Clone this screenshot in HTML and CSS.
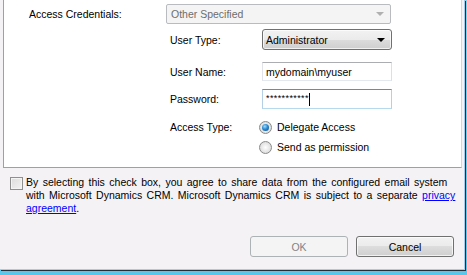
FILE: index.html
```html
<!DOCTYPE html>
<html>
<head>
<meta charset="utf-8">
<link rel="stylesheet" href="styles.css">
</head>
<body>
<div class="desktop">
  <div class="window">
    <div class="panel">
      <div class="row-main">
        <span class="label-main">Access Credentials:</span>
        <div class="combo combo-disabled">
          <span>Other Specified</span>
          <span class="arrow arrow-gray"></span>
        </div>
      </div>
      <div class="sub">
        <span class="lbl r-type">User Type:</span>
        <div class="combo combo-active r-type">
          <span>Administrator</span>
          <span class="arrow"></span>
        </div>
        <span class="lbl r-name">User Name:</span>
        <div class="textbox r-name">mydomain\myuser</div>
        <span class="lbl r-pass">Password:</span>
        <div class="textbox textbox-focus r-pass"><span class="stars">***********</span><span class="caret"></span></div>
        <span class="lbl r-access">Access Type:</span>
        <div class="radio-row r-access"><span class="radio radio-on"></span><span>Delegate Access</span></div>
        <span class="r-send"></span>
        <div class="radio-row r-send"><span class="radio"></span><span>Send as permission</span></div>
      </div>
    </div>
    <div class="consent">
      <span class="checkbox"></span>
      <p class="consent-text">By selecting this check box, you agree to share data from the configured email system with Microsoft Dynamics CRM. Microsoft Dynamics CRM is subject to a separate <a class="link">privacy agreement</a>.</p>
    </div>
    <div class="buttons">
      <div class="btn btn-disabled">OK</div>
      <div class="btn">Cancel</div>
    </div>
  </div>
</div>
</body>
</html>
```

FILE: styles.css
```css
html, body {
  margin: 0;
  padding: 0;
}
body {
  width: 467px;
  height: 275px;
  overflow: hidden;
  font-family: "Liberation Sans", Arial, sans-serif;
  font-size: 10.5px;
  color: #000;
}
.desktop {
  width: 467px;
  height: 275px;
  background: linear-gradient(180deg, #7fd8f2 0%, #5cc6ea 100%);
}
.window {
  width: 464px;
  height: 269px;
  background: #f5f2f6;
  border-right: 1px solid #a8cbea;
  border-bottom: 1px solid #a8cbea;
  box-shadow: 1px 1px 0 #20303c;
  display: flex;
  flex-direction: column;
}
.panel {
  margin-left: 3px;
  width: 459px;
  height: 168px;
  background: #fff;
  border-left: 1px solid #a0a0a0;
  border-right: 1px solid #d5d5d5;
  border-bottom: 1px solid #a0a0a0;
  box-sizing: border-box;
  padding-top: 4px;
}
.row-main {
  display: flex;
  align-items: center;
  height: 20px;
}
.label-main {
  width: 137px;
  padding-left: 25px;
}
.combo {
  box-sizing: border-box;
  display: flex;
  align-items: center;
  justify-content: space-between;
  padding: 0 6px 0 4px;
}
.combo-disabled {
  width: 225px;
  height: 20px;
  border: 1px solid #b8bcc0;
  border-radius: 2px;
  background: #f4f4f4;
  color: #6d6d6d;
}
.arrow {
  width: 0;
  height: 0;
  border-left: 4px solid transparent;
  border-right: 4px solid transparent;
  border-top: 4px solid #000;
}
.arrow-gray {
  border-top-color: #b0b0b0;
}
.sub {
  margin-left: 166px;
  display: grid;
  grid-template-columns: 92px 130px;
  align-items: center;
}
.r-type { grid-row: 1; margin-top: 5px; }
.r-name { grid-row: 2; margin-top: 12px; }
.r-pass { grid-row: 3; margin-top: 8px; }
.r-access { grid-row: 4; margin-top: 10px; }
.r-send { grid-row: 5; margin-top: 4px; }
.combo-active {
  height: 21px;
  border: 1px solid #707070;
  border-radius: 3px;
  background: linear-gradient(180deg, #f2f2f2 0%, #ebebeb 50%, #dddddd 50%, #cfcfcf 100%);
  box-shadow: inset 0 0 0 1px rgba(255,255,255,0.7);
  padding-left: 3px;
}
.textbox {
  box-sizing: border-box;
  height: 19px;
  border: 1px solid #abadb3;
  border-left-color: #e2e3ea;
  border-right-color: #dbdfe6;
  border-bottom-color: #e3e9ef;
  background: #fff;
  padding-left: 3px;
  display: flex;
  align-items: center;
}
.textbox-focus {
  height: 20px;
  border-color: #5a8fbf;
  border-left-color: #b5cfe7;
  border-right-color: #b5cfe7;
  border-bottom-color: #b7d9ed;
}
.stars {
  font-size: 9px;
  letter-spacing: 0.4px;
  margin-top: -3px;
}
.caret {
  width: 1px;
  height: 13px;
  background: #000;
  margin-left: 0;
}
.radio-row {
  display: flex;
  align-items: center;
  height: 16px;
}
.radio {
  box-sizing: border-box;
  flex: none;
  width: 13px;
  height: 13px;
  border-radius: 50%;
  border: 1px solid #8a8a8a;
  background: radial-gradient(circle at 50% 50%, #ffffff 0%, #e6e6e6 55%, #cfcfcf 100%);
  margin-left: -3px;
  margin-right: 5px;
  position: relative;
}
.radio-on::after {
  content: "";
  position: absolute;
  left: 2px;
  top: 2px;
  width: 7px;
  height: 7px;
  border-radius: 50%;
  background: radial-gradient(circle at 40% 35%, #9fdcff 0%, #2a8ad4 45%, #0b3f7a 100%);
}
.consent {
  display: flex;
  align-items: flex-start;
  padding: 8px 1px 0 10px;
}
.checkbox {
  box-sizing: border-box;
  flex: none;
  width: 13px;
  height: 13px;
  margin-top: 1px;
  border: 1px solid #8e8f8f;
  background: linear-gradient(135deg, #dcdcdc 0%, #f3f3f3 100%);
  box-shadow: inset 0 0 0 1px #f4f4f4;
}
.consent-text {
  margin: 0 0 0 3px;
  line-height: 13px;
  word-spacing: 1.5px;
}
.link {
  color: #0000ff;
  text-decoration: underline;
}
.buttons {
  margin-top: auto;
  display: flex;
  justify-content: flex-end;
  gap: 8px;
  padding: 0 10px 12px 0;
}
.btn {
  box-sizing: border-box;
  width: 98px;
  height: 21px;
  border: 1px solid #707070;
  border-radius: 3px;
  background: linear-gradient(180deg, #f2f2f2 0%, #ebebeb 50%, #dddddd 50%, #cfcfcf 100%);
  box-shadow: inset 0 0 0 1px rgba(255,255,255,0.7);
  display: flex;
  align-items: center;
  justify-content: center;
}
.btn-disabled {
  border-color: #adb2b5;
  background: #f4f4f4;
  color: #838383;
  box-shadow: none;
}
```
